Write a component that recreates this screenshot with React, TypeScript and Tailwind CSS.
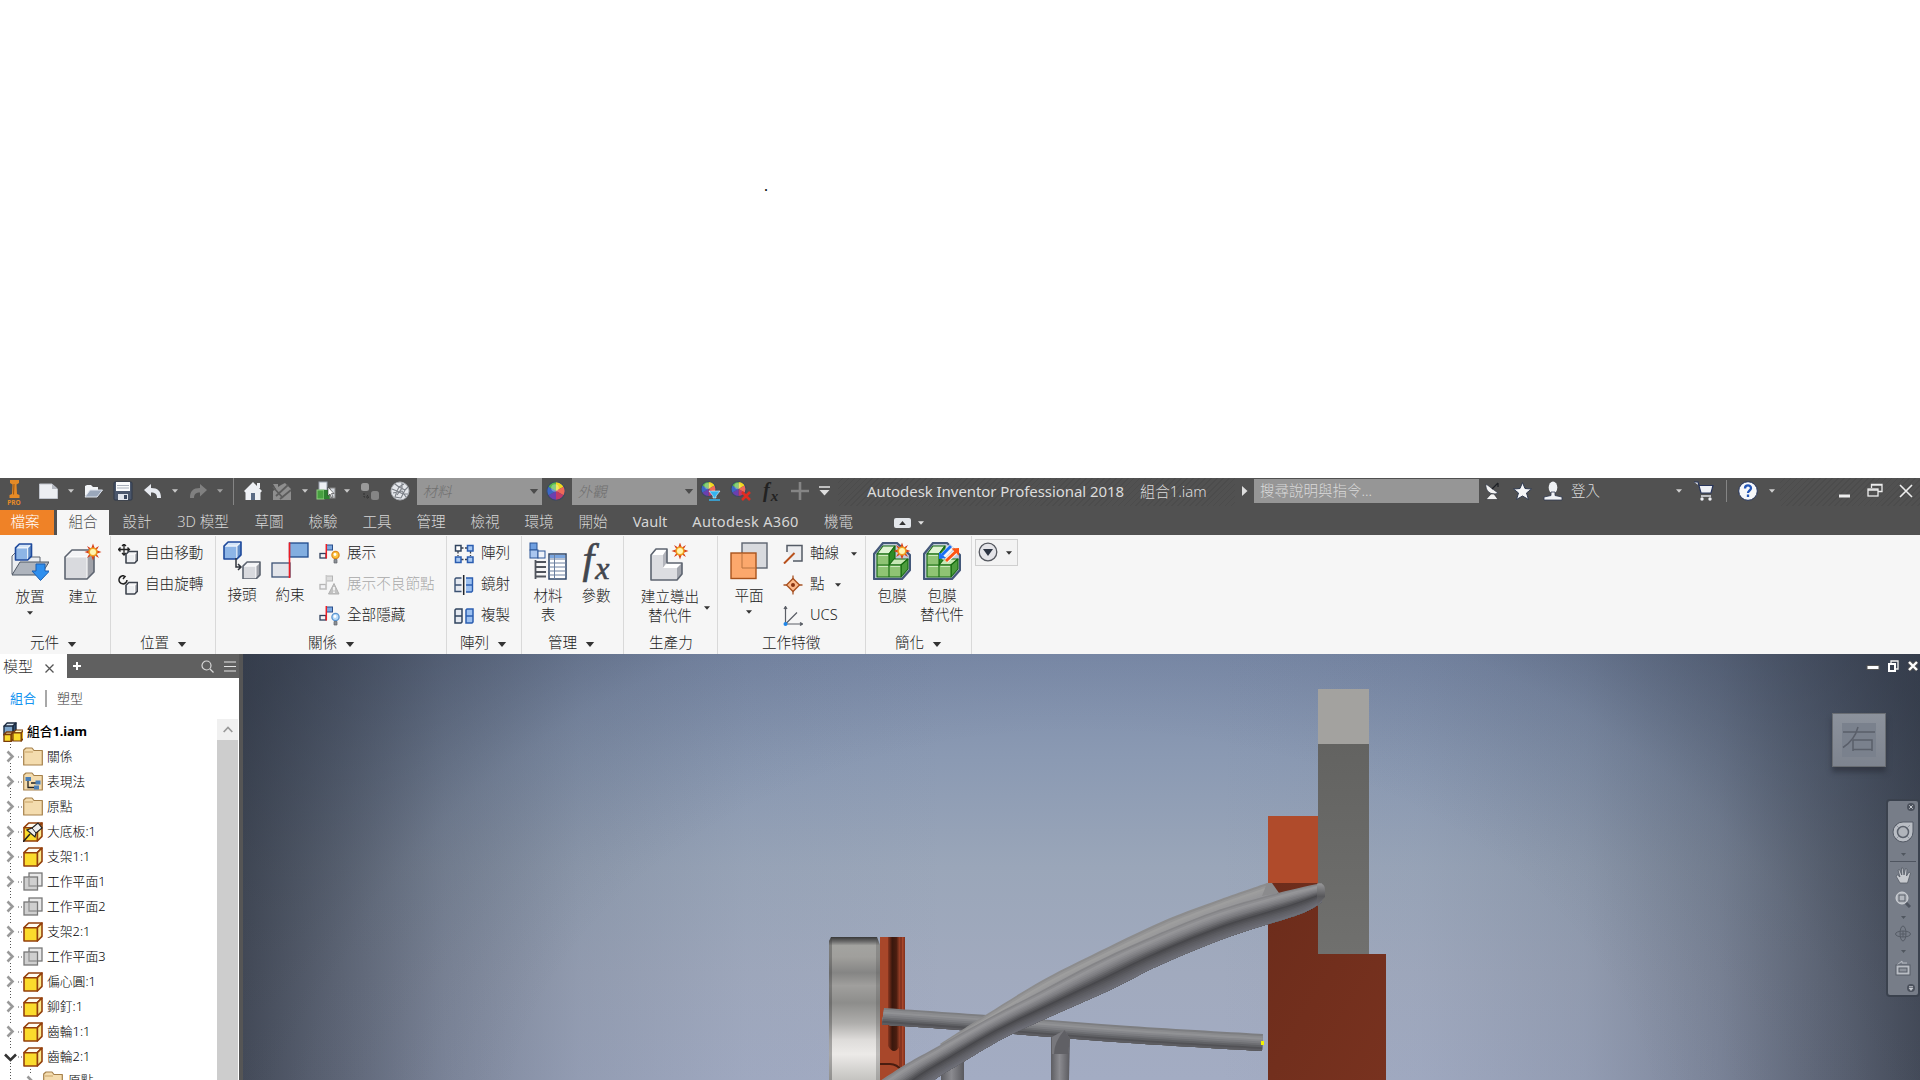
import React from 'react';

type Kids = { children?: React.ReactNode };

const Svg = ({ w, h, vb, children, cls = '' }: Kids & { w: number; h: number; vb?: string; cls?: string }) => (
  <svg width={w} height={h} viewBox={vb ?? `0 0 ${w} ${h}`} fill="none" className={`block shrink-0 ${cls}`}>
    {children}
  </svg>
);

const Down = ({ w = 6, h = 4, c = '#333', cls = '' }: { w?: number; h?: number; c?: string; cls?: string }) => (
  <Svg w={w} h={h} vb="0 0 10 6" cls={cls}>
    <path d="M0 0H10L5 6Z" fill={c} />
  </Svg>
);

/* ---------- shared drawing parts ---------- */

type BoxProps = { x: number; y: number; s: number; f?: string; t?: string; r?: string; k?: string; sw?: number };
const Box = ({ x, y, s, f = '#d9dade', t = '#ffffff', r = '#a9abb2', k = '#5d6470', sw = 1.4 }: BoxProps) => {
  const d = s * 0.26;
  return (
    <g stroke={k} strokeWidth={sw} strokeLinejoin="round">
      <path d={`M${x} ${y + d}L${x + d} ${y}H${x + s}L${x + s - d} ${y + d}Z`} fill={t} />
      <path d={`M${x + s - d} ${y + d}L${x + s} ${y}V${y + s - d}L${x + s - d} ${y + s}Z`} fill={r} />
      <path d={`M${x} ${y + d}H${x + s - d}V${y + s}H${x}Z`} fill={f} />
    </g>
  );
};
/* Large cubes have a bare inner edge: only the silhouette is outlined. */
const SoftBox = ({ x, y, s, f = '#d9dade', t = '#f4f4f6', r = '#a0a2a9', k = '#5d6470' }: BoxProps) => {
  const d = s * 0.24;
  return (
    <g strokeLinejoin="round">
      <path d={`M${x} ${y + d}L${x + d} ${y}H${x + s}L${x + s - d} ${y + d}Z`} fill={t} />
      <path d={`M${x + s - d} ${y + d}L${x + s} ${y}V${y + s - d}L${x + s - d} ${y + s}Z`} fill={r} />
      <path d={`M${x} ${y + d}H${x + s - d}V${y + s}H${x}Z`} fill={f} />
      <path d={`M${x + 1} ${y + d}H${x + s - d}V${y + s - 1}M${x + s - d} ${y + d}L${x + s - 1} ${y + 1}`} stroke="#fff" strokeWidth="1.2" opacity=".8" />
      <path d={`M${x} ${y + d}L${x + d} ${y}H${x + s}V${y + s - d}L${x + s - d} ${y + s}H${x}Z`} stroke={k} strokeWidth="1.6" />
    </g>
  );
};
const blue = { f: '#8db5e6', t: '#d4e5f8', r: '#5f8cc8', k: '#1f4a9c' };

const Burst = ({ x, y }: { x: number; y: number }) => (
  <g transform={`translate(${x} ${y})`}>
    <path
      d="M0-8.5L1.8-3.6L6-6L3.6-1.8L8.5 0L3.6 1.8L6 6L1.8 3.6L0 8.5L-1.8 3.6L-6 6L-3.6 1.8L-8.5 0L-3.6-1.8L-6-6L-1.8-3.6Z"
      fill="#d8401c"
    />
    <circle r="4.6" fill="#f0a020" />
    <circle r="3" fill="#fff6b0" />
  </g>
);

/* ---------- large ribbon icons ---------- */

const PlaceIcon = () => (
  <Svg w={38} h={38}>
    <path d="M1 31V13L4 10H10L13 14H29V31Z" fill="#eceef1" stroke="#5d6470" />
    <path d="M1 32L9 19H38L30 32Z" fill="#aeb4bd" stroke="#4f5865" />
    <SoftBox x={4.5} y={1} s={16} {...blue} />
    <path d="M25 21H34V28H38.5L29.5 37.5L21 28H25Z" fill="#2f8fee" stroke="#1c5fb0" />
  </Svg>
);
const CreateIcon = () => (
  <Svg w={38} h={38}>
    <SoftBox x={1} y={7} s={29} />
    <Burst x={29} y={9} />
  </Svg>
);
const JointIcon = () => (
  <Svg w={38} h={38}>
    <SoftBox x={1} y={1} s={17} {...blue} />
    <SoftBox x={20} y={21} s={17} />
    <path d="M13 17V26H17M15 23L18 26L15 29" stroke="#30343c" strokeWidth="1.5" />
  </Svg>
);
const ConstraintIcon = () => (
  <Svg w={38} h={38}>
    <rect x="18.5" y="2" width="18.5" height="14" fill="#82aee0" stroke="#1f4a8c" strokeWidth="1.3" />
    <rect x="1" y="22" width="18" height="14" fill="#e3e5ea" stroke="#3c5275" strokeWidth="1.3" />
    <path d="M18.5 1.5V37" stroke="#ee1c24" strokeWidth="1.6" />
  </Svg>
);
const BomIcon = () => (
  <Svg w={38} h={38}>
    <g stroke="#2a5596">
      <rect x="1" y="1" width="7" height="7" fill="#6f9fe0" />
      <rect x="1" y="8" width="8" height="8" fill="#a9c6ef" />
      <rect x="9" y="9" width="7" height="7" fill="#eef2f8" />
    </g>
    <path d="M6.5 18V37M6.5 20H17M6.5 25H17M6.5 30H17M6.5 34.5H17" stroke="#50545c" strokeWidth="1.8" />
    <rect x="20" y="12" width="17" height="25" fill="#fff" stroke="#2f4668" strokeWidth="1.5" />
    <rect x="21" y="13" width="15" height="3" fill="#79a5df" />
    <path d="M20 17H37M20 21H37M20 25H37M20 29H37M20 33H37M25.5 13V37" stroke="#6a7f9f" />
  </Svg>
);
const DeriveIcon = () => (
  <Svg w={40} h={38}>
    <g strokeLinejoin="round">
      <path d="M1 12L6 6H17L13 12Z" fill="#fff" />
      <path d="M13 12L17 6V19L13 25Z" fill="#b2b4bb" />
      <path d="M13 25L18 20H32L27 25Z" fill="#fff" />
      <path d="M27 25L32 20V31L27 37Z" fill="#a2a5ad" />
      <path d="M1 12H13V25H27V37H1Z" fill="#dcdde1" />
      <path d="M1 12L6 6H17V20H32V31L27 37H1Z" stroke="#5d6470" strokeWidth="1.6" />
    </g>
    <Burst x={30} y={8} />
  </Svg>
);
const PlaneIcon = () => (
  <Svg w={38} h={38}>
    <rect x="12" y="1" width="25" height="25" fill="#d8dade" stroke="#5d6470" strokeWidth="1.4" />
    <rect x="1" y="11" width="25" height="25.5" fill="#fca86c" stroke="#a8531c" strokeWidth="1.4" />
    <path d="M12 11V26H26" stroke="#b8733f" />
  </Svg>
);
const GreenBlock = () => (
  <g>
    <path d="M1 12L10 1H24L37 13V28L29 37H1Z" fill="#c3ccd9" stroke="#44587a" strokeWidth="2.2" strokeLinejoin="round" />
    <g stroke="#156a10" strokeWidth="1.1" strokeLinejoin="round">
      <path d="M4 12L10 4H22L16 12Z" fill="#dff2d2" />
      <path d="M16 12L22 4V17L16 23Z" fill="#2f8a25" />
      <path d="M16 23L21 17H35L28 23Z" fill="#c8e8b5" />
      <path d="M28 23L35 17V27L28 35Z" fill="#4d9c3d" />
      <path d="M4 12H16V23H28V35H4Z" fill="#8fc474" />
      <path d="M4 23H16V35" />
    </g>
    <path d="M5.5 13.5H15M5.5 24.5H15M17.5 24.5H27" stroke="#cfeabf" />
  </g>
);
const WrapIcon = () => (
  <Svg w={38} h={38}>
    <GreenBlock />
    <Burst x={29} y={9} />
  </Svg>
);
const WrapSubIcon = () => (
  <Svg w={38} h={38}>
    <GreenBlock />
    <path d="M29 4L18 16" stroke="#f6f6f6" strokeWidth="6" />
    <path d="M28 4L19 13" stroke="#1a6ff5" strokeWidth="3" />
    <path d="M16 17V10L23 16Z" fill="#1a6ff5" />
    <path d="M23 19L33 9.5" stroke="#f6f6f6" strokeWidth="5" />
    <path d="M23 19L33 9.5" stroke="#ff5412" strokeWidth="3" />
    <path d="M36 6V13.5L28.5 6.500Z" fill="#ff5412" />
  </Svg>
);
const FxIcon = () => (
  <span className="block h-[38px] w-[34px] text-center font-['Liberation_Serif'] text-[42px] leading-[35px] font-normal whitespace-nowrap text-[#42464e] italic [-webkit-text-stroke:0.6px_#42464e]">
    f<span className="ml-px inline-block translate-y-1.5 text-[32px]">x</span>
  </span>
);

/* ---------- small ribbon icons ---------- */

const MoveIcon = () => (
  <Svg w={20} h={20}>
    <path d="M6 0V11M0.5 5.5H11.5M4 2L6 0L8 2M4 9L6 11L8 9M2.5 3.5L0.5 5.5L2.5 7.5M9.5 3.5L11.5 5.5L9.5 7.5" stroke="#222" strokeWidth="1.3" />
    <SoftBox x={8} y={7.5} s={11.5} k="#3f454f" f="#eceef1" />
  </Svg>
);
const RotateIcon = () => (
  <Svg w={20} h={20}>
    <path d="M6 1A4 4 0 1 0 9 5M4 0L7 1.5L5 4" stroke="#222" strokeWidth="1.5" />
    <SoftBox x={8} y={7.5} s={11.5} k="#3f454f" f="#eceef1" />
  </Svg>
);
const Flag = ({ dim }: { dim?: boolean }) => (
  <g>
    <rect x="7.5" y="1" width="6" height="5" fill={dim ? '#ddd' : '#7ba8e0'} stroke={dim ? '#b5b5b5' : '#2a4f8c'} />
    <rect x="1" y="9.5" width="6" height="4.5" fill="#f3f3f5" stroke={dim ? '#b5b5b5' : '#2f3f5c'} strokeWidth="1.3" />
    <path d="M7.3 0V14.5" stroke={dim ? '#c8c8c8' : '#ee1c24'} strokeWidth="1.5" />
  </g>
);
const ShowIcon = ({ c, k }: { c: string; k: string }) => (
  <Svg w={21} h={20}>
    <Flag />
    <circle cx="16.5" cy="11" r="3.6" fill={c} stroke={k} strokeWidth="1.3" />
    <circle cx="16" cy="10.5" r="1.4" fill="#fff" />
    <path d="M15 15.5H18V19H15Z" fill="#8b8f96" stroke="#5f6369" strokeWidth=".7" />
  </Svg>
);
const SickIcon = () => (
  <Svg w={21} h={20}>
    <Flag dim />
    <path d="M15 8.5L20 19H9.500Z" fill="#c2c2c2" stroke="#b0b0b0" />
    <path d="M15 12V15.5M15 16.5V18" stroke="#fff" strokeWidth="1.5" />
  </Svg>
);
const ArrayIcon = () => (
  <Svg w={20} h={20}>
    <path d="M7 4H14M7 15.5H14M4 7V12M16.5 7V12" stroke="#3a3f4a" strokeDasharray="2.5 1.5" strokeWidth="1.3" />
    <rect x="1.5" y="1.5" width="5.5" height="5.5" fill="#fff" stroke="#31445f" strokeWidth="1.5" />
    <rect x="13.5" y="1.5" width="5.5" height="5.5" fill="#a9c9f2" stroke="#2b5db0" strokeWidth="1.5" />
    <rect x="1.5" y="13" width="5.5" height="5.5" fill="#a9c9f2" stroke="#2b5db0" strokeWidth="1.5" />
    <rect x="13.5" y="13" width="5.5" height="5.5" fill="#a9c9f2" stroke="#2b5db0" strokeWidth="1.5" />
  </Svg>
);
const MirrorIcon = () => (
  <Svg w={20} h={20}>
    <path d="M7.5 3H2L1 4V16.5H7.5M1 10H7.5" fill="#e5e9f0" stroke="#3b5273" strokeWidth="1.4" />
    <path d="M12 3H18.5V16L17.5 17H12M12 10H18.5" fill="#9cc0f0" stroke="#2b5db0" strokeWidth="1.4" />
    <path d="M9.7 0V20" stroke="#1f242c" strokeWidth="1.5" />
  </Svg>
);
const CopyIcon = () => (
  <Svg w={20} h={20}>
    <path d="M1 4L2 3H8V16L7 17H1ZM1 10H8" fill="#e5e9f0" stroke="#31445f" strokeWidth="1.5" />
    <path d="M12 4L13 3H19V16L18 17H12ZM12 10H19" fill="#9cc0f0" stroke="#2b5db0" strokeWidth="1.5" />
  </Svg>
);
const AxisIcon = () => (
  <Svg w={20} h={20}>
    <path d="M4 8V1.5H19V17H10" fill="#ebecef" stroke="#545b66" strokeWidth="1.5" />
    <path d="M1 19.5L11.5 9" stroke="#b8501c" strokeWidth="2" />
  </Svg>
);
const PointIcon = () => (
  <Svg w={20} h={20}>
    <path d="M10 0.5V19.5M0.5 10H19.5" stroke="#a85528" strokeWidth="1.3" />
    <path d="M10 3.5L16.5 10L10 16.5L3.5 10Z" fill="#fcb98a" stroke="#a8501f" strokeWidth="1.3" />
    <circle cx="10" cy="10" r="2" fill="#8a3510" />
  </Svg>
);
const UcsIcon = () => (
  <Svg w={20} h={20}>
    <path d="M2.5 1V18H19M2.5 18L14 6.5M1 3L2.5 0.5L4 3M17 16.5L19.5 18L17 19.5" stroke="#5a5e66" strokeWidth="1.2" />
    <circle cx="2.5" cy="18" r="2" fill="#1f86e8" />
  </Svg>
);

/* ---------- title bar ---------- */

const Wheel = ({ id, r = 9.2, cx = 10, cy = 10 }: { id: string; r?: number; cx?: number; cy?: number }) => {
  const cols = ['#f0d820', '#ee6a58', '#c03a6a', '#6a40b0', '#3a68c8', '#58b848'];
  return (
    <g>
      {cols.map((c, i) => {
        const a = ((i * 60 - 90) * Math.PI) / 180;
        const b = ((i * 60 - 30) * Math.PI) / 180;
        return (
          <path
            key={id + i}
            d={`M${cx} ${cy}L${cx + r * Math.cos(a)} ${cy + r * Math.sin(a)}A${r} ${r} 0 0 1 ${cx + r * Math.cos(b)} ${cy + r * Math.sin(b)}Z`}
            fill={c}
          />
        );
      })}
      <circle cx={cx} cy={cy} r={r} stroke="#3a4a60" strokeWidth="1.1" />
      <circle cx={cx - 1} cy={cy - 3} r={r / 2.4} fill="#fff" opacity=".3" />
    </g>
  );
};

const Combo = ({ text }: { text: string }) => (
  <div className="mb-[3px] flex h-[27px] w-[125px] shrink-0 items-center justify-between bg-[#969696] pr-[3px] pb-px pl-[7px] text-[14.5px] text-[#707070]">
    <span className="-skew-x-12">{text}</span>
    <Down w={10} h={5} c="#4c4c4c" />
  </div>
);

const QuickAccess = () => (
  <div className="flex h-[30px] w-[838px] shrink-0 items-center">
    <div className="ml-[6px] flex w-4 flex-col items-center">
      <Svg w={11} h={18}>
        <path d="M1 0H10V3L7.5 4.5L8 14L10.5 15V18H.5V15L3 14L3.5 4.5L1 3Z" fill="#e58a26" />
        <path d="M5 4L4.5 14.5" stroke="#9c5510" />
      </Svg>
      <span className="mt-px text-[6.5px] leading-[7px] font-bold text-[#e58a26]">PRO</span>
    </div>
    <div className="mb-1 flex items-center">
      <Svg w={19} h={16} cls="ml-[17px]">
        <path d="M.5 1H13L18.5 6V15.5H.5Z" fill="#eceef2" stroke="#c0c4cc" />
        <path d="M13 1V6H18.5" fill="#b4b8c0" />
      </Svg>
      <Down w={6} c="#c9c9c9" cls="ml-[10px]" />
      <Svg w={19} h={14} cls="ml-[10px]">
        <path d="M1 12V2L3 1H7L9 3H14V6" fill="#f2f4f7" />
        <path d="M1 13L6 6H18.5L13 13Z" fill="#9aa7ba" stroke="#dfe4ec" />
      </Svg>
      <Svg w={20} h={20} cls="ml-[10px]">
        <rect x="1" y="1" width="18" height="18" rx="1" fill="#4a566b" stroke="#2f394a" />
        <rect x="3" y="1" width="14" height="9" fill="#fafbfc" />
        <path d="M4 4.5H16M4 7H16" stroke="#a9b0bb" />
        <rect x="5" y="13" width="10" height="6" fill="#dfe3ea" />
        <rect x="11" y="14" width="3" height="4" fill="#39465c" />
      </Svg>
      <Svg w={18} h={14} cls="ml-[11px]">
        <path d="M0 6L7 0V4C14 4 17 7 17 14H13C13 10 11 8.5 7 8.5V12.5Z" fill="#e7eaf0" />
      </Svg>
      <Down w={6} c="#c9c9c9" cls="ml-[10px]" />
      <Svg w={18} h={14} cls="ml-[11px]">
        <path d="M18 6L11 0V4C4 4 1 7 1 14H5C5 10 7 8.5 11 8.5V12.5Z" fill="#808080" />
      </Svg>
      <Down w={6} c="#a0a0a0" cls="ml-[10px]" />
      <span className="ml-[10px] h-[27px] w-px bg-[#858585]" />
      <Svg w={18} h={18} cls="ml-[10px]">
        <path d="M9 0L18 9L16.5 10.5V18H1.5V10.5L0 9Z" fill="#eef0f4" />
        <rect x="13" y="1" width="3" height="5" fill="#eef0f4" />
        <rect x="7" y="11" width="4" height="7" fill="#5b6b85" />
      </Svg>
      <Svg w={20} h={19} cls="ml-[10px]">
        <path d="M1 2H6V5L9 3L13 1L19 7V18H1V9L4 7Z" fill="#8e8e8e" />
        <path d="M1 5L11 16M16 3L4 14M8 17L19 8" stroke="#5c5c5c" strokeWidth="1.8" />
      </Svg>
      <Down w={6} c="#c9c9c9" cls="ml-[10px]" />
      <Svg w={20} h={20} cls="ml-[8px]">
        <rect x="3" y="1" width="8" height="8" fill="#eef0f4" stroke="#9aa2ae" />
        <rect x="1" y="9" width="7" height="9" fill="#47a040" stroke="#8fd080" />
        <rect x="8" y="9" width="6" height="9" fill="#2e8030" />
        <rect x="14" y="7" width="5" height="10" fill="#d5d9df" stroke="#888" />
        <path d="M12 6V15L14 13L15.5 16.5L17 16L15.5 12.500H18Z" fill="#fff" stroke="#333" strokeWidth=".6" />
      </Svg>
      <Down w={6} c="#c9c9c9" cls="ml-[8px]" />
      <Svg w={20} h={19} cls="ml-[10px]">
        <rect x="1" y="1" width="8" height="8" rx="2.5" fill="#9a9a9a" />
        <rect x="11" y="9" width="8" height="9" rx="2.5" fill="#858585" />
        <path d="M4 11V15H9M7 13L9 15L7 17" stroke="#333" strokeDasharray="2 1" />
      </Svg>
      <Svg w={20} h={20} cls="ml-[10px]">
        <circle cx="10" cy="10" r="9" fill="#e4e6ea" stroke="#a8abb0" />
        <path d="M5 3L9 6L14 3M2 8L7 10L9 6M7 10L5 16L11 17M9 6L15 9L18 6M15 9L13 13L11 17M7 10L13 13L18 13M12 2V7L7 14M3 12L12 10L16 16" stroke="#7c8087" strokeWidth="1.1" />
      </Svg>
    </div>
    <div className="ml-[7px] flex items-center">
      <Combo text="材料" />
      <Svg w={20} h={20} cls="mb-1 ml-1">
        <Wheel id="a" />
      </Svg>
      <div className="ml-[6px] flex">
        <Combo text="外觀" />
      </div>
    </div>
    <div className="mb-1 flex items-center">
      <Svg w={21} h={20} cls="ml-[3px]">
        <Wheel id="b" r={7.5} cx={8.5} cy={8} />
        <path d="M9 10H20L16 15V17H13V15Z" fill="#35b5f0" stroke="#e8f6ff" strokeWidth=".6" />
        <path d="M9 19H20" stroke="#35b5f0" strokeWidth="1.5" />
      </Svg>
      <Svg w={21} h={20} cls="ml-[9px]">
        <Wheel id="c" r={7.5} cx={8.5} cy={8} />
        <path d="M12 11L20 19M20 11L12 19" stroke="#e02c20" strokeWidth="2.5" />
      </Svg>
      <span className="ml-[12px] w-5 font-['Liberation_Serif'] text-[20px] leading-5 font-bold whitespace-nowrap text-[#222] italic">
        f<span className="ml-px inline-block translate-y-1 text-[15px]">x</span>
      </span>
      <Svg w={18} h={18} cls="ml-[8px]">
        <path d="M9 0V18M0 9H18" stroke="#858585" strokeWidth="2.6" />
      </Svg>
      <Svg w={11} h={10} cls="ml-[10px]">
        <path d="M0 1H11" stroke="#dedede" strokeWidth="1.6" />
        <path d="M.5 4H10.5L5.500 9.5Z" fill="#dedede" />
      </Svg>
    </div>
  </div>
);

const hatch =
  'bg-[repeating-linear-gradient(135deg,#515151_0px,#515151_3px,#4c4c4c_3px,#4c4c4c_4.2px)]';

const TitleBar = () => (
  <div className="flex h-8 items-start bg-[#515151] text-[#dcdcdc]">
    <QuickAccess />
    <div className={`flex h-[28px] w-[397px] shrink-0 items-center pb-px pl-[29px] text-[15px] ${hatch}`}>
      <span className="w-[273px] font-['Noto_Sans','Noto_Sans_CJK_TC',sans-serif] font-normal tracking-[-0.06px] whitespace-nowrap">
        Autodesk Inventor Professional 2018
      </span>
      <span className="tracking-[-0.1px] whitespace-nowrap">組合1.iam</span>
    </div>
    <div className="flex h-[26px] w-[545px] shrink-0 items-center">
      <Svg w={6} h={10} cls="ml-[7px]">
        <path d="M0 0V10L5.5 5Z" fill="#dedede" />
      </Svg>
      <div className="ml-[6px] flex h-6 w-[225px] items-center bg-[#969696] pb-[2px] text-[14.5px] text-[#dadada]">
        <span className="ml-[6px]">搜尋說明與指令...</span>
      </div>
      <Svg w={16} h={18} cls="ml-[6px]">
        <path d="M1 2C0 9 6 14 13 11Z" fill="#f4f4f4" stroke="#303848" strokeWidth=".7" />
        <path d="M7 7L13 1M13 1V5" stroke="#1c1f24" strokeWidth="1.2" />
        <path d="M1 17.5L6 12H9L13 17.500Z" fill="#f4f4f4" stroke="#26292e" strokeWidth=".6" />
      </Svg>
      <Svg w={19} h={18} cls="ml-[12px]">
        <path d="M9.500 .5L12 6.500L18.500 7L13.500 11L15.500 17.500L9.500 14L3.500 17.500L5.500 11L.5 7L7 6.500Z" fill="#f5f6f8" stroke="#2e3950" />
      </Svg>
      <Svg w={20} h={20} cls="ml-[11px]">
        <ellipse cx="10" cy="6.5" rx="4.300" ry="6" fill="#f0f2f5" />
        <path d="M8 11H12V14.5L19 16V19H1V16L8 14.500Z" fill="#f0f2f5" stroke="#2e3950" strokeWidth=".8" />
      </Svg>
      <span className="mb-0.5 ml-[8px] w-[105px] text-[14.5px]">登入</span>
      <Down w={6} c="#cfcfcf" />
      <Svg w={20} h={20} cls="ml-[12px]">
        <path d="M0 1H4L7 12H17L19 4.5H5" fill="#eef0f5" stroke="#27345a" strokeWidth="1.2" />
        <path d="M7 15H17" stroke="#eef0f5" strokeWidth="1.4" />
        <circle cx="8" cy="18" r="1.7" fill="#eef0f5" />
        <circle cx="16" cy="18" r="1.7" fill="#eef0f5" />
      </Svg>
      <span className="ml-[12px] h-[22px] w-px bg-[#858585]" />
      <Svg w={20} h={20} cls="ml-[11px]">
        <circle cx="10" cy="10" r="9.3" fill="#f7f8fa" stroke="#24345c" />
        <path d="M7 7.5C7 3.5 13 3.5 13 7.3C13 9.5 10 9.5 10 12M10 13.5V16" stroke="#2457b8" strokeWidth="2.3" />
      </Svg>
      <Down w={6} c="#cfcfcf" cls="ml-[11px]" />
    </div>
    <div className={`flex h-[28px] flex-1 items-center ${hatch}`}>
      <Svg w={11} h={10} cls="mt-0.5 ml-[59px]">
        <path d="M0 8H11" stroke="#ededed" strokeWidth="3" />
      </Svg>
      <Svg w={16} h={14} cls="mb-1 ml-[17px]">
        <path d="M4.5 5V1.5H15V8.5H11M4.5 2H15" stroke="#ededed" strokeWidth="1.3" />
        <rect x="1" y="6" width="10" height="7" stroke="#ededed" strokeWidth="1.3" />
        <path d="M1 7H11" stroke="#ededed" strokeWidth="1.5" />
      </Svg>
      <Svg w={14} h={14} cls="mb-0.5 ml-[16px]">
        <path d="M1 1L13 13M13 1L1 13" stroke="#ededed" strokeWidth="1.6" />
      </Svg>
    </div>
  </div>
);

/* ---------- ribbon ---------- */

const Tab = ({ children, w }: Kids & { w: string }) => (
  <div className={`flex shrink-0 items-center justify-center pb-0.5 whitespace-nowrap ${w}`}>{children}</div>
);

const Tabs = () => (
  <div className="flex h-[25px] bg-[#515151] text-[14.6px] text-[#d6d6d6]">
    <Tab w="w-[54px] pr-1 bg-[#ef8227] text-white">檔案</Tab>
    <Tab w="ml-[3px] w-[52px] bg-[#f6f6f6] text-[#505050]">組合</Tab>
    <div className="ml-px flex">
      <Tab w="w-[54px]">設計</Tab>
      <Tab w="w-[78px]">3D 模型</Tab>
      {['草圖', '檢驗', '工具', '管理', '檢視', '環境', '開始'].map((t) => (
        <Tab key={t} w="w-[54px]">{t}</Tab>
      ))}
      <Tab w="w-[60px] font-normal">Vault</Tab>
      <Tab w="w-[131px] font-normal tracking-[0.3px]">Autodesk A360</Tab>
      <Tab w="w-[55px]">機電</Tab>
    </div>
    <div className="ml-[28px] flex items-center">
      <div className="flex h-[10px] w-[17px] items-center justify-center rounded-[2px] bg-[#e3e6ea]">
        <Down w={7} h={4} c="#333" cls="rotate-180" />
      </div>
      <Down w={6} c="#e0e0e0" cls="ml-[7px]" />
    </div>
  </div>
);

const Panel = ({ w, lab, pad, noArrow, children }: Kids & { w: string; lab: string; pad: string; noArrow?: boolean }) => (
  <div className={`flex shrink-0 flex-col border-r border-[#d9d9d9] ${w}`}>
    <div className="flex h-[96px]">{children}</div>
    <div className={`flex h-[21px] items-center whitespace-nowrap ${pad}`}>
      {lab}
      {!noArrow && <Down w={10} h={5} c="#333" cls="mt-1 ml-[8px]" />}
    </div>
  </div>
);

const Big = ({ icon, w, l1, l2, arrow }: { icon: React.ReactNode; w: string; l1: string; l2?: string; arrow?: boolean }) => (
  <div className={`flex shrink-0 flex-col items-center pt-[7px] ${w}`}>
    <div className="h-[44px]">{icon}</div>
    <span className="h-[19px] leading-[19px] whitespace-nowrap">{l1}</span>
    {l2 && <span className="h-[19px] leading-[19px] whitespace-nowrap">{l2}</span>}
    {arrow && <Down w={6} cls="mt-[5px]" />}
  </div>
);

const Row = ({ icon, text, arrow, dim }: { icon: React.ReactNode; text: string; arrow?: string; dim?: boolean }) => (
  <div className="flex h-[31px] items-center whitespace-nowrap">
    {icon}
    <span className={dim ? 'mb-[3px] ml-[7px] text-[#a8a8a8]' : 'mb-[3px] ml-[7px]'}>{text}</span>
    {arrow && <Down w={6} cls={arrow} />}
  </div>
);

const Ribbon = () => (
  <div className="flex h-[119px] bg-[#f6f6f6] pt-px text-[14.6px] text-[#222]">
    <Panel w="w-[111px]" lab="元件" pad="pl-[30px]">
      <Big icon={<PlaceIcon />} w="ml-[10px] w-[40px]" l1="放置" arrow />
      <Big icon={<CreateIcon />} w="ml-[14px] w-[38px]" l1="建立" />
    </Panel>
    <Panel w="w-[105px]" lab="位置" pad="pl-[29px]">
      <div className="ml-[7px] pt-[2px]">
        <Row icon={<MoveIcon />} text="自由移動" />
        <Row icon={<RotateIcon />} text="自由旋轉" />
      </div>
    </Panel>
    <Panel w="w-[231px]" lab="關係" pad="pl-[92px]">
      <Big icon={<JointIcon />} w="-mt-[2px] ml-[7px] w-[38px]" l1="接頭" />
      <Big icon={<ConstraintIcon />} w="-mt-[2px] ml-[10px] w-[38px]" l1="約束" />
      <div className="ml-[10px] pt-[2px]">
        <Row icon={<ShowIcon c="#fdc540" k="#e08a1c" />} text="展示" />
        <Row icon={<SickIcon />} text="展示不良節點" dim />
        <Row icon={<ShowIcon c="#b8dcfa" k="#5a94d0" />} text="全部隱藏" />
      </div>
    </Panel>
    <Panel w="w-[75px]" lab="陣列" pad="pl-[13px]">
      <div className="ml-[7px] pt-[2px]">
        <Row icon={<ArrayIcon />} text="陣列" />
        <Row icon={<MirrorIcon />} text="鏡射" />
        <Row icon={<CopyIcon />} text="複製" />
      </div>
    </Panel>
    <Panel w="w-[102px]" lab="管理" pad="pl-[26px]">
      <Big icon={<BomIcon />} w="-mt-px ml-[7px] w-[38px]" l1="材料" l2="表" />
      <Big icon={<FxIcon />} w="-mt-px ml-[10px] w-[38px]" l1="參數" />
    </Panel>
    <Panel w="w-[94px]" lab="生產力" pad="pl-[25px]" noArrow>
      <Big icon={<DeriveIcon />} w="ml-[15px] w-[62px]" l1="建立導出" l2="替代件" />
      <Down w={6} cls="mt-[70px] ml-[3px]" />
    </Panel>
    <Panel w="w-[148px]" lab="工作特徵" pad="pl-[44px]" noArrow>
      <Big icon={<PlaneIcon />} w="-mt-px ml-[12px] w-[38px]" l1="平面" arrow />
      <div className="ml-[15px] pt-[2px]">
        <Row icon={<AxisIcon />} text="軸線" arrow="ml-3" />
        <Row icon={<PointIcon />} text="點" arrow="ml-[10px]" />
        <Row icon={<UcsIcon />} text="UCS" />
      </div>
    </Panel>
    <Panel w="w-[106px]" lab="簡化" pad="pl-[29px]">
      <Big icon={<WrapIcon />} w="-mt-px ml-[6px] w-[40px]" l1="包膜" />
      <Big icon={<WrapSubIcon />} w="-mt-px ml-[7px] w-[46px]" l1="包膜" l2="替代件" />
    </Panel>
    <div className="mt-[3px] ml-[3px] flex h-[27px] w-[43px] items-center border border-[#cfcfcf] bg-[#f3f3f3] pb-px pl-[2px]">
      <Svg w={20} h={20}>
        <circle cx="10" cy="10" r="8.800" fill="#e4e4e8" stroke="#55585f" strokeWidth="1.3" />
        <path d="M5 7H15L10 14Z" fill="#2c3442" />
      </Svg>
      <Down w={6} cls="mt-px ml-[8px]" />
    </div>
  </div>
);

/* ---------- browser panel ---------- */

const FolderArt = () => (
  <path d="M.7 18V3L3 1H9L11 3.5H19.3V18Z" fill="#f4dcae" stroke="#a5804a" strokeWidth="1.2" strokeLinejoin="round" />
);
const TreeIcon = ({ kind }: { kind: string }) => (
  <Svg w={20} h={20}>
    {kind === 'folder' && <FolderArt />}
    {kind === 'folder' && <path d="M2 5H10" stroke="#c9a469" />}
    {kind === 'rep' && (
      <g>
        <FolderArt />
        <path d="M5 8V15.5H12M8 11H14" stroke="#222" strokeWidth="1.3" />
        <rect x="2.500" y="5" width="5.500" height="4" fill="#4a7fb8" />
        <rect x="12.500" y="8.500" width="5" height="4" fill="#4a7fb8" />
        <rect x="11" y="13.500" width="5" height="4" fill="#4a7fb8" />
      </g>
    )}
    {(kind === 'part' || kind === 'pin') && (
      <Box x={1} y={1} s={18} f="#fbdc2c" t="#fffdf2" r="#fbe98a" k="#94400c" sw={1.6} />
    )}
    {kind === 'pin' && (
      <g>
        <path d="M0 20L7 12" stroke="#222" strokeWidth="1.5" />
        <path d="M4 8L12 15L13 11L19 6L15 1L9 6Z" fill="#eee" stroke="#222" strokeWidth="1.2" />
        <path d="M9 6L13 11" stroke="#222" />
      </g>
    )}
    {kind === 'plane' && (
      <g stroke="#777" strokeWidth="1.3">
        <rect x="6" y="1" width="13" height="13" fill="#e8e8e8" />
        <rect x="1" y="5" width="13.5" height="13" fill="#cfcfcf" />
        <path d="M6 5V14H14" stroke="#999" />
      </g>
    )}
  </Svg>
);

const rows: [string, string][] = [
  ['folder', '關係'], ['rep', '表現法'], ['folder', '原點'], ['pin', '大底板:1'], ['part', '支架1:1'],
  ['plane', '工作平面1'], ['plane', '工作平面2'], ['part', '支架2:1'], ['plane', '工作平面3'],
  ['part', '偏心圓:1'], ['part', '鉚釘:1'], ['part', '齒輪1:1'], ['part', '齒輪2:1'],
];

const Guide = ({ open }: { open?: boolean }) => (
  <Svg w={23} h={25}>
    <path d="M10.5 0V6M10.5 19V25M18 13H22" stroke="#555" strokeDasharray="1 2" />
    {open ? (
      <path d="M5 10.5L10.5 16L16 10.5" stroke="#333" strokeWidth="2.6" />
    ) : (
      <path d="M7.500 7.5L12.500 12.500L7.500 17.500" stroke="#999" strokeWidth="2.6" />
    )}
  </Svg>
);

const Browser = () => (
  <div className="flex w-[243px] shrink-0 flex-col border-r-4 border-[#555] bg-white">
    <div className="flex h-6 bg-[#606060]">
      <div className="flex w-[67px] items-center bg-white pl-[3px] text-[15px] text-[#333]">
        <span className="h-6 leading-6">模型</span>
        <Svg w={9} h={9} cls="mt-1 ml-[12px]">
          <path d="M.5 .5L8.5 8.5M8.5 .5L.5 8.5" stroke="#555" strokeWidth="1.3" />
        </Svg>
      </div>
      <div className="flex items-center">
        <Svg w={8} h={8} cls="ml-[6px]">
          <path d="M4 0V8M0 4H8" stroke="#fff" strokeWidth="2" />
        </Svg>
        <Svg w={13} h={13} cls="ml-[120px]">
          <circle cx="5.5" cy="5.5" r="4.5" stroke="#d8d8d8" strokeWidth="1.2" />
          <path d="M9 9L12.5 12.5" stroke="#d8d8d8" strokeWidth="1.2" />
        </Svg>
        <Svg w={12} h={11} cls="ml-[10px]">
          <path d="M0 1H12M0 5.5H12M0 10H12" stroke="#e4e4e4" strokeWidth="1.1" />
        </Svg>
      </div>
    </div>
    <div className="flex h-[41px] items-center pb-px pl-[10px] text-[13px]">
      <span className="font-normal text-[#1494f0]">組合</span>
      <span className="ml-[9px] h-[17px] w-[2px] bg-[#a8a8a8]" />
      <span className="ml-[10px] text-[#333]">塑型</span>
    </div>
    <div className="flex flex-1 pr-px">
      <div className="flex w-[217px] flex-col text-[12.8px] text-black">
        <div className="flex h-[25px] items-center pl-[3px]">
          <Svg w={20} h={20}>
            <Box x={1} y={1} s={12} f="#7ea6cc" t="#dce9f5" r="#2f4d70" k="#1c2b40" />
            <Box x={1} y={10} s={9.5} f="#fbdc2c" t="#fff6b8" r="#e0b020" k="#7a3c0a" />
            <Box x={10} y={8} s={11} f="#fbdc2c" t="#fff6b8" r="#e0b020" k="#7a3c0a" sw={1.2} />
          </Svg>
          <span className="ml-1 font-medium">組合</span>
          <span className="font-['Noto_Sans'] font-bold tracking-[-0.15px]">1.iam</span>
        </div>
        {rows.map(([k, t]) => (
          <div key={t} className="flex h-[25px] items-center">
            <Guide open={t === '齒輪2:1'} />
            <TreeIcon kind={k} />
            <span className="mb-px ml-[4px]">{t}</span>
          </div>
        ))}
        <div className="flex h-[11px] items-start overflow-hidden">
          <Svg w={43} h={25}>
            <path d="M10.5 0V25M30.5 0V5" stroke="#555" strokeDasharray="1 2" />
            <path d="M27.500 7.500L32.500 12.500L27.500 17.500" stroke="#999" strokeWidth="2.6" />
          </Svg>
          <div className="mt-[2px]">
            <TreeIcon kind="folder" />
          </div>
          <span className="ml-[5px] leading-[23px]">原點</span>
        </div>
      </div>
      <div className="flex flex-1 flex-col bg-[#cdcdcd]">
        <div className="flex h-[21px] items-center justify-center bg-[#f0f0f0]">
          <Svg w={10} h={7}>
            <path d="M.7 6L5 1.5L9.3 6" stroke="#999" strokeWidth="1.7" />
          </Svg>
        </div>
      </div>
    </div>
  </div>
);

/* ---------- model view ---------- */

type Pt = [number, number];
const mix = (stops: [number, number[]][], t: number) => {
  let i = 0;
  while (i < stops.length - 2 && t > stops[i + 1][0]) i++;
  const [a, ca] = stops[i];
  const [b, cb] = stops[i + 1];
  const k = (t - a) / (b - a);
  return `rgb(${ca.map((v, j) => Math.round(v + (cb[j] - v) * k)).join(',')})`;
};
const smooth = (p: Pt[]) => {
  let d = '';
  for (let i = 0; i < p.length - 1; i++) {
    const p0 = p[Math.max(0, i - 1)], p1 = p[i], p2 = p[i + 1], p3 = p[Math.min(p.length - 1, i + 2)];
    d += `C${p1[0] + (p2[0] - p0[0]) / 6} ${p1[1] + (p2[1] - p0[1]) / 6} ${p2[0] - (p3[0] - p1[0]) / 6} ${p2[1] - (p3[1] - p1[1]) / 6} ${p2[0]} ${p2[1]}`;
  }
  return d;
};
const Tube = ({ a, b, stops, n = 14 }: { a: Pt[]; b: Pt[]; stops: [number, number[]][]; n?: number }) => (
  <g>
    {Array.from({ length: n }, (_, i) => {
      const at = (t: number): Pt[] => a.map((p, j) => [p[0] + (b[j][0] - p[0]) * t, p[1] + (b[j][1] - p[1]) * t]);
      const lo = at(i / n);
      const hi = b.slice().reverse();
      return (
        <path
          key={i}
          d={`M${lo[0][0]} ${lo[0][1]}${smooth(lo)}L${hi[0][0]} ${hi[0][1]}${smooth(hi)}Z`}
          fill={mix(stops, (i + 0.5) / n)}
        />
      );
    })}
  </g>
);

const steel: [number, number[]][] = [
  [0, [128, 128, 131]], [0.15, [152, 152, 155]], [0.35, [124, 124, 128]], [0.58, [72, 72, 76]], [0.75, [92, 92, 97]], [1, [112, 113, 122]],
];
const backSteel: [number, number[]][] = [[0, [135, 135, 136]], [0.3, [158, 158, 158]], [0.8, [146, 146, 150]], [1, [128, 128, 132]]];
const rod: [number, number[]][] = [
  [0, [118, 119, 122]], [0.25, [148, 149, 152]], [0.55, [118, 119, 123]], [0.85, [80, 80, 84]], [1, [100, 100, 106]],
];

const frontTop: Pt[] = [[1322, 883], [1278, 893], [1213, 912], [1144, 940], [1092, 964], [1041, 991], [987, 1019], [935, 1048], [903, 1066], [868, 1089]];
const frontBot: Pt[] = [[1322, 902], [1300, 914], [1231, 936], [1160, 965], [1110, 990], [1058, 1013], [1004, 1038], [958, 1065], [934, 1080], [912, 1098]];
const backTop: Pt[] = [[1267, 883], [1213, 902], [1161, 922], [1092, 955], [1041, 981], [987, 1014], [940, 1044]];
const backBot: Pt[] = [[1279, 896], [1222, 915], [1170, 937], [1099, 969], [1047, 995], [993, 1026], [946, 1050]];

const Scene = () => (
  <svg width={1677} height={426} viewBox="243 654 1677 426" fill="none" className="block">
    <defs>
      <linearGradient id="disc" x1="0" y1="937" x2="0" y2="1080" gradientUnits="userSpaceOnUse">
        <stop offset="0" stopColor="#383838" />
        <stop offset=".03" stopColor="#686868" />
        <stop offset=".06" stopColor="#a3a3a0" />
        <stop offset=".14" stopColor="#a09f9c" />
        <stop offset=".25" stopColor="#858584" />
        <stop offset=".34" stopColor="#a09f9d" />
        <stop offset=".46" stopColor="#8d8d8b" />
        <stop offset=".6" stopColor="#aeadab" />
        <stop offset=".72" stopColor="#dedcda" />
        <stop offset=".82" stopColor="#eceae8" />
        <stop offset="1" stopColor="#c4c3c0" />
      </linearGradient>
      <linearGradient id="post" x1="0" y1="0" x2="1" y2="0">
        <stop offset="0" stopColor="#5d5d62" />
        <stop offset=".45" stopColor="#8b8b90" />
        <stop offset="1" stopColor="#59595e" />
      </linearGradient>
      <linearGradient id="slot" x1="0" y1="0" x2="1" y2="0">
        <stop offset="0" stopColor="#8a3720" />
        <stop offset=".35" stopColor="#3a170d" />
        <stop offset=".7" stopColor="#4a1d10" />
        <stop offset="1" stopColor="#a04228" />
      </linearGradient>
      <linearGradient id="slab" x1="0" y1="0" x2="0" y2="1">
        <stop offset="0" stopColor="#636361" />
        <stop offset="1" stopColor="#70706e" />
      </linearGradient>
      <linearGradient id="rust" x1="0" y1="0" x2="1" y2="1">
        <stop offset="0" stopColor="#6c2c1b" />
        <stop offset="1" stopColor="#78321f" />
      </linearGradient>
      <linearGradient id="cap" x1="0" y1="0" x2="0" y2="1">
        <stop offset="0" stopColor="#98989a" />
        <stop offset=".6" stopColor="#58585b" />
        <stop offset="1" stopColor="#6a6a70" />
      </linearGradient>
    </defs>

    <rect x="1268" y="816" width="50" height="67" fill="#b04b2b" />
    <path d="M1268 883H1318V954H1386V1080H1268Z" fill="url(#rust)" />
    <rect x="1318" y="689" width="51" height="55" fill="#a3a29f" />
    <rect x="1318" y="744" width="51" height="210" fill="url(#slab)" />

    <path d="M831 937H877L880 945V1080H829V941Z" fill="url(#disc)" />
    <path d="M829 941L832 938V1080H829Z" fill="#444" opacity=".4" />
    <path d="M876 937L880 945V1080H876Z" fill="#555" opacity=".3" />

    <rect x="880" y="937" width="25" height="143" fill="#a8472a" />
    <rect x="899" y="937" width="6" height="130" fill="#86341f" />
    <rect x="902" y="937" width="1.5" height="130" fill="#a8472a" />
    <path d="M888 937H900V1046Q894 1056 888 1046Z" fill="url(#slot)" />
    <path d="M880 1064H890Q897 1064 902 1071" stroke="#4a1d10" strokeWidth="2" />

    <path d="M1051 1037L1070 1037L1069 1080H1051Z" fill="url(#post)" />
    <Tube
      n={9}
      stops={rod}
      a={[[884, 1008], [1000, 1016], [1130, 1026], [1263, 1034]]}
      b={[[882, 1024.5], [1000, 1033], [1130, 1043], [1262, 1051]]}
    />
    <path d="M1052 1037L1064.500 1030L1070 1039L1068 1054H1052Z" fill="#78787d" />
    <path d="M1064.500 1030L1070 1039L1068 1054H1054Q1054 1042 1064.500 1030Z" fill="#606065" />
    <rect x="1261" y="1041" width="3" height="4" fill="#f2f200" />

    <path d="M941 1080V1068Q950 1056 964 1059V1080Z" fill="url(#post)" />
    <Tube a={backTop} b={backBot} stops={backSteel} n={8} />
    <path d="M1267 883L1272 883L1279 893L1262 896Z" fill="#8b8b8d" />
    <Tube a={frontTop} b={frontBot} stops={steel} n={18} />
    <path d="M1317 883.500Q1325 882 1325 890V897L1317 905Z" fill="url(#cap)" />
  </svg>
);

const ViewCube = () => (
  <div className="absolute top-[59px] right-[34px] flex h-[54px] w-[54px] items-center justify-center border border-[#696d73] bg-linear-to-b from-[#8c929c] to-[#7e848f] shadow-[0_5px_5px_rgba(40,44,54,0.6)]">
    <div className="flex h-[34px] w-[34px] items-center justify-center bg-[#7a818d]">
      <Svg w={34} h={34}>
        <path d="M1 9H33M16 4C14 12 8 20 1 24.5M11 17V28M11 17H30V28M11 26.5H30" stroke="#5a5f6a" strokeWidth="1.5" />
      </Svg>
    </div>
  </div>
);

const NavBar = () => (
  <div className="absolute top-[145px] right-0 flex h-[198px] w-[34px] flex-col items-center rounded-[4px] border-2 border-[#3b424e] bg-[#777d88] pt-[2px]">
    <Svg w={8} h={8} cls="mr-[3px] self-end">
      <circle cx="4" cy="4" r="4" fill="#4c525d" />
      <path d="M2.3 2.3L5.7 5.7M5.7 2.3L2.3 5.7" stroke="#c8ccd2" />
    </Svg>
    <Svg w={22} h={22} cls="mt-[10px]">
      <path d="M11 1H21V11A10 10 0 1 1 11 1Z" fill="#b9bdc4" stroke="#555b66" />
      <circle cx="11" cy="11" r="5.5" fill="#b0b4bb" stroke="#5a606b" strokeWidth="1.5" />
      <path d="M4 4L7 7M15 15L18 18M4 18L7 15M15 7L18 4" stroke="#8d929b" />
    </Svg>
    <Down w={5} h={3} c="#50565f" cls="mt-[10px]" />
    <span className="mt-[5px] h-px w-[26px] shrink-0 bg-[#4f5560]" />
    <Svg w={16} h={17} cls="mt-[5px]">
      <path d="M5 16L1 9L2.5 8L5 10L3 3L4.5 2.5L6.8 8L6.5 1H8L9 8L10.5 1.5L12 2L11.5 9L14 5L15.5 6L12.5 16Z" fill="#c6c9ce" stroke="#565c66" strokeWidth=".8" />
    </Svg>
    <Svg w={16} h={17} cls="mt-[7px]">
      <path d="M10 11L15 16" stroke="#4f5560" strokeWidth="3" />
      <circle cx="7" cy="7" r="6" fill="#b4b8bf" stroke="#d2d5da" />
      <rect x="4" y="4" width="6" height="6" stroke="#585e68" />
    </Svg>
    <Down w={5} h={3} c="#50565f" cls="mt-[8px]" />
    <Svg w={16} h={17} cls="mt-[6px]">
      <ellipse cx="8" cy="8.5" rx="3" ry="7.5" stroke="#565c66" />
      <ellipse cx="8" cy="9" rx="7.5" ry="3" stroke="#565c66" />
      <path d="M8 6V12M5 9H11" stroke="#565c66" />
    </Svg>
    <Down w={5} h={3} c="#50565f" cls="mt-[8px]" />
    <Svg w={16} h={16} cls="mt-[7px]">
      <path d="M2 5L7 1V3H12" stroke="#b9bdc4" />
      <rect x="1" y="5" width="14" height="10" fill="#b9bdc4" stroke="#565c66" />
      <rect x="4" y="8" width="8" height="4" fill="#8d929b" stroke="#565c66" />
    </Svg>
    <Svg w={8} h={8} cls="mt-[8px] mr-[3px] self-end">
      <circle cx="4" cy="4" r="4" fill="#4c525d" />
      <path d="M2 2.5H6M2 4L4 6.500L6 4Z" fill="#c8ccd2" stroke="#c8ccd2" strokeWidth=".7" />
    </Svg>
  </div>
);

const View = () => (
  <div className="relative flex-1 overflow-hidden bg-[radial-gradient(ellipse_62%_175%_at_50%_115%,transparent_55%,rgba(48,56,72,0.1)_75%,rgba(38,45,58,0.42)_100%),linear-gradient(to_right,rgba(48,54,66,0.78)_0%,rgba(55,62,76,0.6)_6%,rgba(66,75,92,0.4)_12%,rgba(80,92,112,0.2)_20%,rgba(90,106,136,0.06)_30%,transparent_42%,transparent_58%,rgba(90,106,136,0.06)_70%,rgba(80,92,112,0.2)_80%,rgba(66,75,92,0.4)_88%,rgba(55,62,76,0.6)_94%,rgba(48,54,66,0.78)_100%),linear-gradient(to_bottom,#7b8ba9_0%,#8b9ab3_25%,#9aa6b9_50%,#a1aabe_75%,#a3acc3_100%)]">
    <Scene />
    <div className="absolute top-[6px] right-[1px] flex items-center">
      <Svg w={14} h={12}>
        <rect x="1" y="5.5" width="12" height="4" fill="#fff" stroke="#555" />
      </Svg>
      <Svg w={12} h={12} cls="ml-[7px]">
        <path d="M4 3V1H11V9H9" stroke="#f0f0f0" strokeWidth="1.3" />
        <rect x="2" y="4" width="6" height="7" stroke="#fff" strokeWidth="2" />
      </Svg>
      <Svg w={12} h={12} cls="ml-[8px]">
        <path d="M2 2L10 10M10 2L2 10" stroke="#555" strokeWidth="4" />
        <path d="M2 2L10 10M10 2L2 10" stroke="#fff" strokeWidth="2.4" />
      </Svg>
    </div>
    <ViewCube />
    <NavBar />
  </div>
);

export default function App() {
  return (
    <div className="flex h-[1080px] w-[1920px] flex-col overflow-hidden bg-white font-['Noto_Sans','Noto_Sans_CJK_TC',sans-serif] leading-none font-light">
      <div className="flex h-[478px] shrink-0 pt-[176px] pl-[764px] font-['Liberation_Serif'] text-base leading-5 text-black">.</div>
      <TitleBar />
      <Tabs />
      <Ribbon />
      <div className="flex h-[426px]">
        <Browser />
        <View />
      </div>
    </div>
  );
}
